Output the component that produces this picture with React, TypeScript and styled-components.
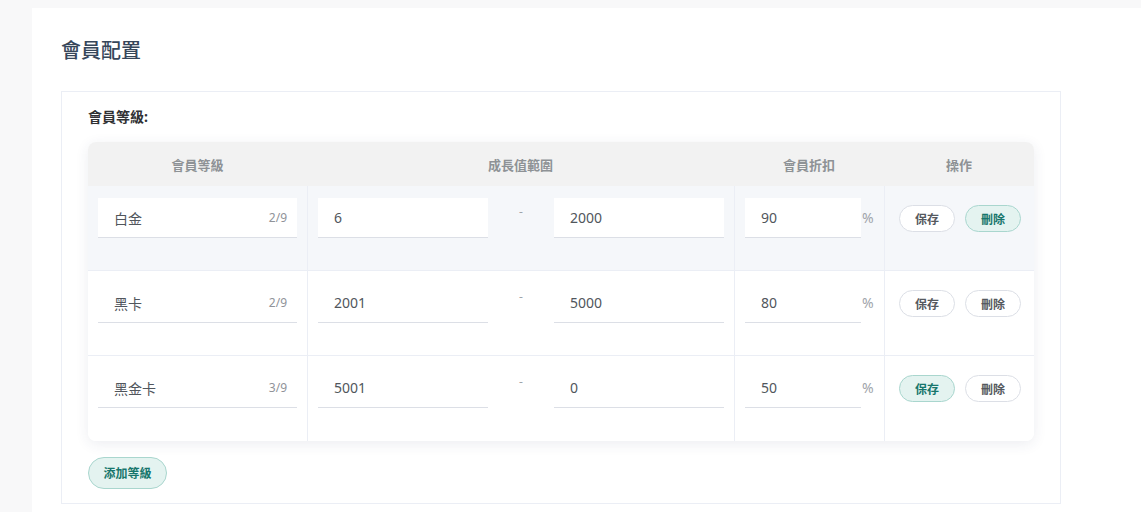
import React from 'react';
import styled, { createGlobalStyle } from 'styled-components';

const GlobalStyle = createGlobalStyle`
  body {
    margin: 0;
    background: #f8f8f9;
    font-family: "Noto Sans", "Noto Sans CJK TC", sans-serif;
  }
`

interface Level {
  name: string
  from: string
  to: string
  discount: string
  active?: 'save' | 'delete'
}

const levels: Level[] = [
  { name: '白金', from: '6', to: '2000', discount: '90', active: 'delete' },
  { name: '黑卡', from: '2001', to: '5000', discount: '80' },
  { name: '黑金卡', from: '5001', to: '0', discount: '50', active: 'save' },
]

const Page = styled.div`
  margin: 8px 0 0 32px;
  min-height: 504px;
  background: #fff;
  padding: 29px 0 0 29px;
  box-sizing: border-box;
`

const Title = styled.h2`
  margin: 0 0 26px;
  font-size: 20px;
  line-height: 28px;
  font-weight: 500;
  color: #36465a;
`

const Card = styled.div`
  width: 1000px;
  box-sizing: border-box;
  border: 1px solid #ebeef5;
  padding: 15px 26px 14px;
`

const Label = styled.div`
  font-size: 14px;
  line-height: 20px;
  font-weight: 700;
  color: #303133;
  margin-bottom: 15px;
`

const Table = styled.div`
  display: grid;
  grid-template-columns: 219px 427px 150px 150px;
  width: 946px;
  border-radius: 8px;
  overflow: hidden;
  box-shadow: 0 3px 14px rgba(40, 60, 100, 0.09);
  background: #fff;
`

const HeadCell = styled.div`
  height: 44px;
  display: flex;
  align-items: center;
  justify-content: center;
  background: #f2f2f2;
  font-size: 13px;
  font-weight: 700;
  color: #8e9296;
`

const Cell = styled.div<{ $hover?: boolean; $first?: boolean; $bottom?: boolean }>`
  height: 85px;
  box-sizing: border-box;
  padding: 12px 10px 0;
  display: flex;
  align-items: flex-start;
  background: ${p => (p.$hover ? '#f5f7fa' : '#fff')};
  border-left: ${p => (p.$first ? 'none' : '1px solid #ebeef5')};
  border-bottom: ${p => (p.$bottom ? 'none' : '1px solid #ebeef5')};
`

const Field = styled.div<{ $width?: number }>`
  display: flex;
  align-items: center;
  height: 40px;
  box-sizing: border-box;
  width: ${p => (p.$width ? `${p.$width}px` : '100%')};
  background: #fff;
  border-bottom: 1px solid #dcdfe6;
  padding: 0 10px 0 16px;
`

const Input = styled.input`
  flex: 1;
  min-width: 0;
  border: none;
  outline: none;
  background: transparent;
  padding: 0;
  font-family: "Noto Sans", "Noto Sans CJK TC", sans-serif;
  font-size: 14px;
  color: #51565c;
`

const Counter = styled.span`
  font-size: 12px;
  color: #909399;
`

const Dash = styled.span`
  flex: 1;
  text-align: center;
  font-size: 12px;
  line-height: 28px;
  color: #a0a4aa;
`

const Unit = styled.span`
  font-size: 14px;
  line-height: 40px;
  color: #a0a4aa;
  margin-left: 1px;
`

const Actions = styled.div`
  display: flex;
  gap: 10px;
  padding: 7px 0 0 4px;
`

const PillButton = styled.button<{ $active?: boolean }>`
  height: 27px;
  padding: 0;
  width: 56px;
  border-radius: 14px;
  border: 1px solid ${p => (p.$active ? '#a9d6ce' : '#dcdfe6')};
  background: ${p => (p.$active ? '#e4f3f0' : '#fff')};
  color: ${p => (p.$active ? '#17766c' : '#55595e')};
  font-family: "Noto Sans", "Noto Sans CJK TC", sans-serif;
  font-size: 12px;
  font-weight: 700;
  cursor: pointer;
`

const AddButton = styled(PillButton)`
  width: 79px;
  height: 32px;
  border-radius: 16px;
  margin-top: 16px;
`

function LevelRow({ level, index }: { level: Level; index: number }) {
  const hover = index === 0
  const bottom = index === levels.length - 1
  return <>
    <Cell $hover={hover} $bottom={bottom} $first>
      <Field>
        <Input defaultValue={level.name} />
        <Counter>{level.name.length}/9</Counter>
      </Field>
    </Cell>
    <Cell $hover={hover} $bottom={bottom}>
      <Field $width={170}>
        <Input defaultValue={level.from} />
      </Field>
      <Dash>-</Dash>
      <Field $width={170}>
        <Input defaultValue={level.to} />
      </Field>
    </Cell>
    <Cell $hover={hover} $bottom={bottom}>
      <Field $width={116}>
        <Input defaultValue={level.discount} />
      </Field>
      <Unit>%</Unit>
    </Cell>
    <Cell $hover={hover} $bottom={bottom}>
      <Actions>
        <PillButton $active={level.active === 'save'}>保存</PillButton>
        <PillButton $active={level.active === 'delete'}>刪除</PillButton>
      </Actions>
    </Cell>
  </>
}

export default function App() {
  return <>
    <GlobalStyle />
    <Page>
      <Title>會員配置</Title>
      <Card>
        <Label>會員等級:</Label>
        <Table>
          <HeadCell>會員等級</HeadCell>
          <HeadCell>成長值範圍</HeadCell>
          <HeadCell>會員折扣</HeadCell>
          <HeadCell>操作</HeadCell>
          {levels.map((level, i) => <LevelRow key={level.name} level={level} index={i} />)}
        </Table>
        <AddButton $active>添加等級</AddButton>
      </Card>
    </Page>
  </>
}
